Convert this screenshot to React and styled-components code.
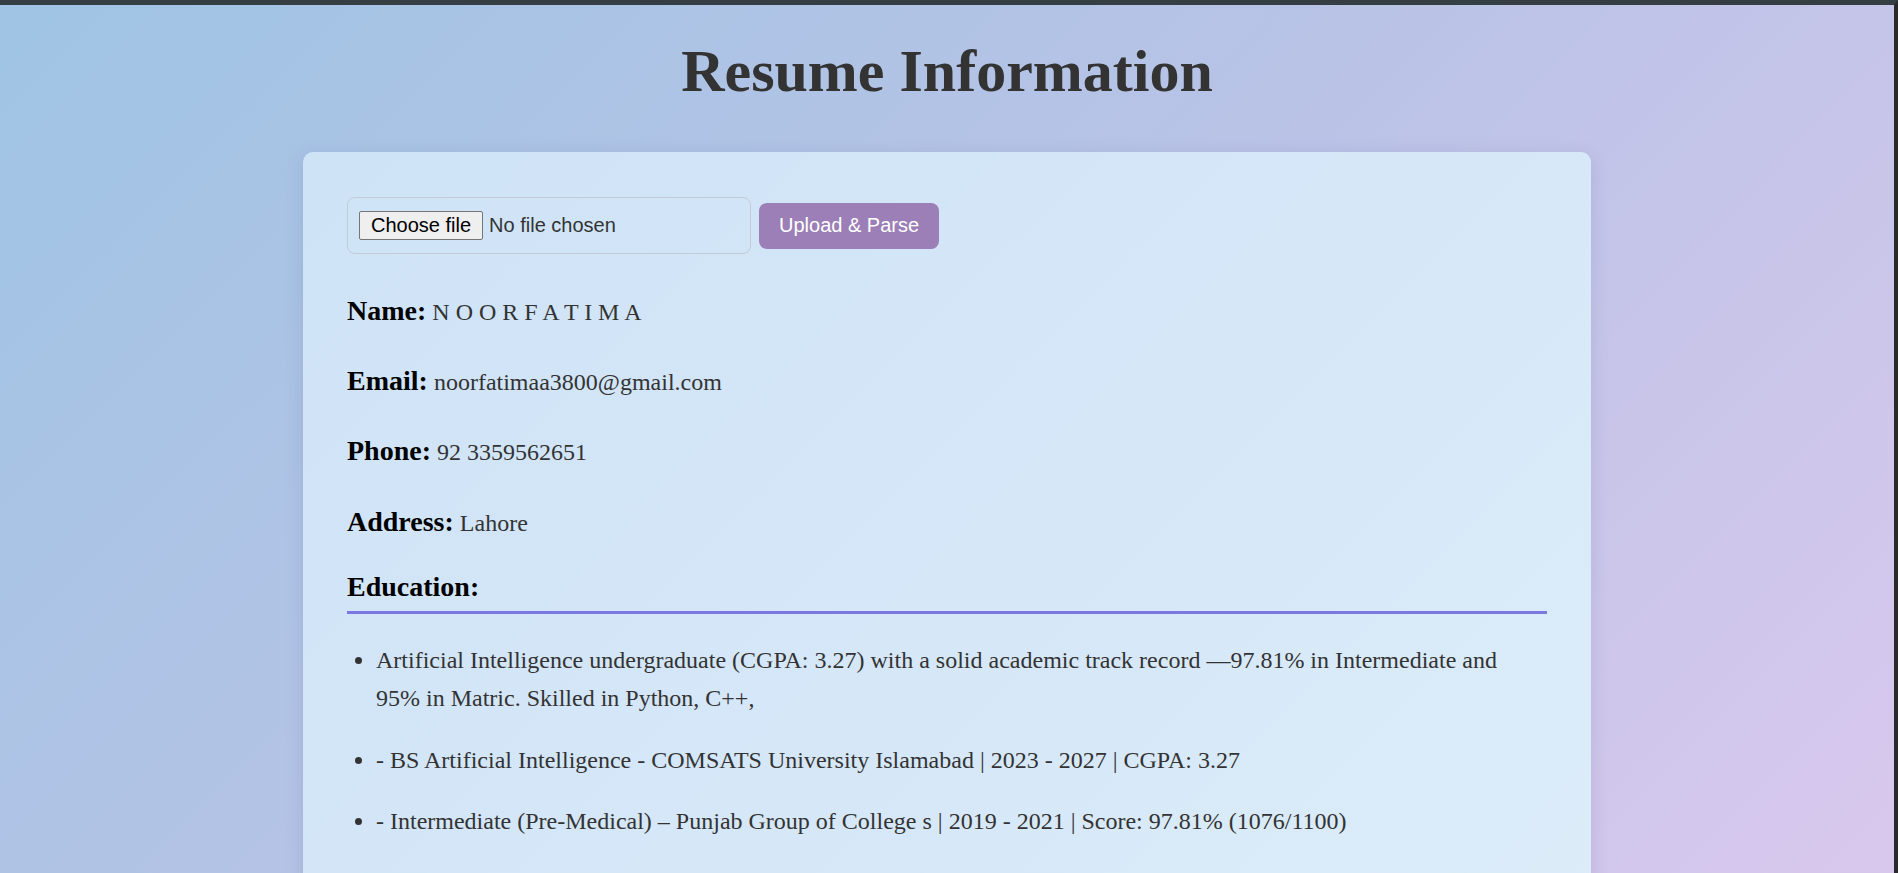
import React from "react";
import styled, { createGlobalStyle } from "styled-components";

const GlobalStyle = createGlobalStyle`
  * {
    box-sizing: border-box;
  }

  html,
  body {
    margin: 0;
    padding: 0;
  }

  body {
    font-family: "Liberation Serif", "Times New Roman", serif;
    color: #333;
  }
`;

const Frame = styled.div`
  min-height: 100vh;
  border-top: 5px solid #343e43;
  border-right: 4px solid #2a2a2a;
  background: linear-gradient(135deg, #9fc4e4 0%, #b9c3e6 50%, #dac8ee 100%);
  overflow: hidden;
`;

const Title = styled.h1`
  margin: 32px 0 46px;
  text-align: center;
  font-size: 60px;
  line-height: 69px;
  font-weight: 700;
  color: #333;
`;

const Card = styled.div`
  width: 1288px;
  margin: 0 auto;
  padding: 45px 44px;
  border-radius: 10px;
  background: linear-gradient(135deg, #cfe3f7 0%, #d6e8f8 60%, #dcecf9 100%);
  box-shadow: 0 4px 18px rgba(60, 70, 120, 0.15);
`;

const UploadRow = styled.div`
  display: flex;
  align-items: center;
  gap: 8px;
`;

const FilePicker = styled.label`
  display: flex;
  align-items: center;
  gap: 6px;
  width: 404px;
  height: 57px;
  padding: 0 11px;
  border: 1px solid #c3ccd6;
  border-radius: 8px;
  font-family: "Liberation Sans", Arial, sans-serif;
  font-size: 20px;
  color: #333;
  cursor: pointer;

  input {
    display: none;
  }
`;

const ChooseButton = styled.span`
  padding: 2px 11px;
  border: 1px solid #767676;
  border-radius: 2px;
  background-color: #efefef;
  line-height: 23px;
  color: #000;
`;

const UploadButton = styled.button`
  height: 46px;
  padding: 0 20px;
  border: none;
  border-radius: 8px;
  background-color: #9b7fb6;
  color: #fff;
  font-family: "Liberation Sans", Arial, sans-serif;
  font-size: 20px;
  cursor: pointer;
`;

const InfoRow = styled.p`
  margin: ${(p) => (p.$first ? "37px" : "0")} 0 29.2px;
  font-size: 24px;
  line-height: 40px;
  color: #333;

  strong {
    font-size: 28px;
    color: #000;
  }
`;

const SectionHeading = styled.h3`
  margin: 2.5px 0 0;
  padding-bottom: 9.5px;
  border-bottom: 3px solid #7b78e0;
  font-size: 28px;
  line-height: 30px;
  font-weight: 700;
  color: #000;
`;

const List = styled.ul`
  margin: 26.7px 0 0;
  padding: 0 24px 0 29px;
  list-style: disc;
`;

const Item = styled.li`
  margin-bottom: 23px;
  font-size: 24px;
  line-height: 38.4px;
  color: #333;
`;

const info = [
  ["Name:", "N O O R F A T I M A"],
  ["Email:", "noorfatimaa3800@gmail.com"],
  ["Phone:", "92 3359562651"],
  ["Address:", "Lahore"],
];

const education = [
  "Artificial Intelligence undergraduate (CGPA: 3.27) with a solid academic track record \u201497.81% in Intermediate and 95% in Matric. Skilled in Python, C++,",
  "- BS Artificial Intelligence - COMSATS University Islamabad | 2023 - 2027 | CGPA: 3.27",
  "- Intermediate (Pre-Medical) \u2013 Punjab Group of College s | 2019 - 2021 | Score: 97.81% (1076/1100)",
];

export default function App() {
  return (
    <>
      <GlobalStyle />
      <Frame>
        <Title>Resume Information</Title>
        <Card>
          <UploadRow>
            <FilePicker>
              <input type="file" />
              <ChooseButton>Choose file</ChooseButton>
              <span>No file chosen</span>
            </FilePicker>
            <UploadButton>Upload &amp; Parse</UploadButton>
          </UploadRow>

          {info.map(([label, value], i) => (
            <InfoRow key={label} $first={i === 0}>
              <strong>{label}</strong> {value}
            </InfoRow>
          ))}

          <SectionHeading>Education:</SectionHeading>
          <List>
            {education.map((line) => (
              <Item key={line}>{line}</Item>
            ))}
          </List>
        </Card>
      </Frame>
    </>
  );
}
